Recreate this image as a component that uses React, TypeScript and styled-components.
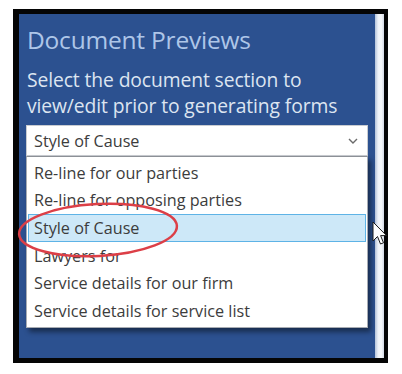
import { createGlobalStyle } from 'styled-components';
import styled from 'styled-components';

const GlobalStyle = createGlobalStyle`
    html, body {
        margin: 0;
        padding: 0;
        background: #ffffff;
    }
    body {
        font-family: 'Open Sans', 'Noto Sans', sans-serif;
    }
`;

const Page = styled.div`
    padding: 9px 0 0 13px;
`;

const Frame = styled.div`
    width: 375px;
    height: 354px;
    box-sizing: border-box;
    padding: 5px 4px 5px 6px;
    background: #050505;
    display: flex;
`;

const Panel = styled.div`
    position: relative;
    flex: 1;
    background: #2c5190;
    padding: 10px 7px 0 7px;
    box-sizing: border-box;
`;

const EdgeStrip = styled.div`
    width: 9px;
    background: linear-gradient(to right, #b4c3da, #eef2f8 35%, #f6f8fb 70%, #d3dae6);
`;

const Title = styled.h1`
    margin: 0 0 0 1px;
    font-size: 24.5px;
    font-weight: 400;
    line-height: 32px;
    color: #aec6e8;
    letter-spacing: -0.2px;
`;

const Subtitle = styled.p`
    margin: 11px 0 0 1px;
    font-size: 19.3px;
    line-height: 26px;
    color: #dde5f1;
    letter-spacing: -0.1px;
`;

const Combo = styled.div`
    margin-top: 6px;
    height: 31px;
    box-sizing: border-box;
    background: #ffffff;
    border: 1px solid #c9ccd1;
    display: flex;
    align-items: center;
    justify-content: space-between;
    padding: 0 9px 0 7px;
    font-size: 16.2px;
    color: #3c3c3c;
`;

const List = styled.ul`
    list-style: none;
    margin: 0;
    padding: 2px 0;
    background: #ffffff;
    border: 1px solid #a8acb3;
    border-top-color: #8c9096;
    box-shadow: 3px 4px 5px rgba(0, 0, 0, 0.45);
`;

const Item = styled.li<{ $selected?: boolean }>`
    height: 27.6px;
    box-sizing: border-box;
    display: flex;
    align-items: center;
    padding-left: 5px;
    margin: 0 1px;
    font-size: 16.2px;
    color: #3c3c3c;
    background: ${(p) => (p.$selected ? '#cde8f8' : 'transparent')};
    border: 1px solid ${(p) => (p.$selected ? '#5eb3e6' : 'transparent')};
`;

const Ring = styled.svg`
    position: absolute;
    left: -4px;
    top: 184px;
    pointer-events: none;
`;

const Cursor = styled.svg`
    position: absolute;
    left: 353px;
    top: 207px;
    pointer-events: none;
`;

const items = [
    'Re-line for our parties',
    'Re-line for opposing parties',
    'Style of Cause',
    'Lawyers for',
    'Service details for our firm',
    'Service details for service list',
];

const App: React.FC = (): JSX.Element => {
    return (
        <Page>
            <GlobalStyle />
            <Frame>
                <Panel>
                    <Title>Document Previews</Title>
                    <Subtitle>
                        Select the document section to
                        <br />
                        view/edit prior to generating forms
                    </Subtitle>
                    <Combo>
                        <span>Style of Cause</span>
                        <svg width='10' height='6' viewBox='0 0 10 6'>
                            <path d='M1 1 L5 5 L9 1' fill='none' stroke='#6a6a6a' strokeWidth='1.4' />
                        </svg>
                    </Combo>
                    <List>
                        {items.map((item) => (
                            <Item key={item} $selected={item === 'Style of Cause'}>
                                {item}
                            </Item>
                        ))}
                    </List>
                    {/* annotation ring drawn over the list */}
                    <Ring width='170' height='64' viewBox='0 0 170 64'>
                        <ellipse
                            cx='83'
                            cy='32'
                            rx='79'
                            ry='26'
                            fill='none'
                            stroke='#dc3f47'
                            strokeWidth='2.5'
                            transform='rotate(-3 83 32)'
                        />
                    </Ring>
                    <Cursor width='16' height='26' viewBox='0 0 16 26'>
                        <path
                            d='M1 1 L1 20 L5.5 15.5 L8.5 23 L11.5 21.8 L8.6 14.6 L14.5 14.6 Z'
                            fill='#ffffff'
                            stroke='#1a1a1a'
                            strokeWidth='1'
                            strokeLinejoin='round'
                        />
                    </Cursor>
                </Panel>
                <EdgeStrip />
            </Frame>
        </Page>
    );
};

export default App;
